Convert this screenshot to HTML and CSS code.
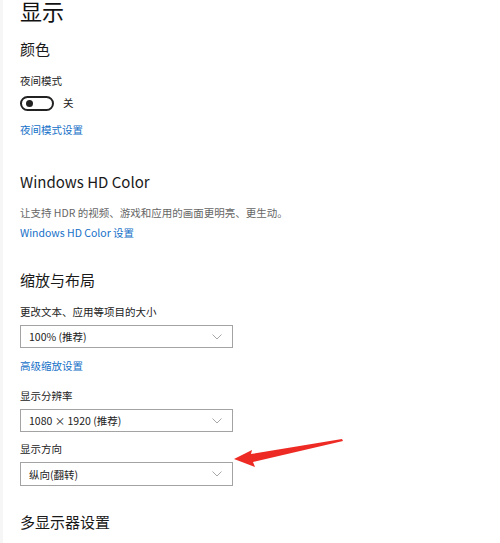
FILE: index.html
```html
<!DOCTYPE html>
<html lang="zh-CN">
<head>
<meta charset="utf-8">
<link rel="stylesheet" href="styles.css">
</head>
<body>
<div class="page">
  <div class="content">
    <h1 class="title">显示</h1>
    <h2 class="h-color">颜色</h2>
    <div class="label l-night">夜间模式</div>
    <div class="toggle-row">
      <span class="toggle"><span class="knob"></span></span>
      <span class="toggle-text">关</span>
    </div>
    <a class="link l-nightset">夜间模式设置</a>

    <h2 class="h-hd">Windows HD Color</h2>
    <div class="desc">让支持 HDR 的视频、游戏和应用的画面更明亮、更生动。</div>
    <a class="link l-hdset">Windows HD Color 设置</a>

    <h2 class="h-scale">缩放与布局</h2>
    <div class="label l-size">更改文本、应用等项目的大小</div>
    <div class="select s1"><span>100% (推荐)</span><svg class="chev" width="10" height="6" viewBox="0 0 10 6"><path d="M0.5 0.5 L5 5 L9.5 0.5" fill="none" stroke="#a8a8a8" stroke-width="1"/></svg></div>
    <a class="link l-adv">高级缩放设置</a>
    <div class="label l-res">显示分辨率</div>
    <div class="select s2"><span>1080 × 1920 (推荐)</span><svg class="chev" width="10" height="6" viewBox="0 0 10 6"><path d="M0.5 0.5 L5 5 L9.5 0.5" fill="none" stroke="#a8a8a8" stroke-width="1"/></svg></div>
    <div class="label l-ori">显示方向</div>
    <div class="select s3"><span>纵向(翻转)</span><svg class="chev" width="10" height="6" viewBox="0 0 10 6"><path d="M0.5 0.5 L5 5 L9.5 0.5" fill="none" stroke="#a8a8a8" stroke-width="1"/></svg></div>

    <h2 class="h-multi">多显示器设置</h2>
  </div>
  <svg class="arrow" width="130" height="45" viewBox="225 430 130 45">
    <polygon points="231,459 249,450 248,454 339,439 340,441 250,462 252,467" fill="#ee2a24"/>
  </svg>
</div>
</body>
</html>
```
FILE: styles.css
```css
html, body {
  margin: 0;
  padding: 0;
  background: #ffffff;
}
body {
  font-family: "Noto Sans CJK SC", "Noto Sans", sans-serif;
  color: #1a1a1a;
  overflow: hidden;
}
.page {
  position: relative;
  width: 500px;
  height: 543px;
  overflow: hidden;
  border-left: 3px solid #f6f6f6;
  box-sizing: border-box;
}
.content {
  padding-left: 17px;
  display: flex;
  flex-direction: column;
  align-items: flex-start;
}
h1, h2 {
  font-weight: normal;
  margin: 0;
}
.title {
  font-size: 22px;
  line-height: 30px;
  margin-top: -5px;
  color: #111;
}
h2 {
  font-size: 15px;
  line-height: 20px;
  color: #1a1a1a;
}
.label, .link, .desc, .toggle-text {
  font-size: 10.5px;
  line-height: 16px;
}
.label { color: #222; }
.desc { color: #666; }
.link { color: #1570c8; text-decoration: none; }

.h-color { margin-top: 14px; }
.l-night { margin-top: 14px; }
.toggle-row {
  margin-top: 6px;
  height: 16px;
  display: flex;
  align-items: center;
  gap: 9px;
}
.toggle {
  width: 34px;
  height: 15px;
  border: 2px solid #222;
  border-radius: 9px;
  box-sizing: border-box;
  display: flex;
  align-items: center;
  padding-left: 4px;
}
.knob {
  width: 7px;
  height: 7px;
  border-radius: 50%;
  background: #222;
}
.toggle-text { color: #222; }
.l-nightset { margin-top: 11px; }
.h-hd { margin-top: 34px; }
.desc { margin-top: 13px; }
.l-hdset { margin-top: 4px; }
.h-scale { margin-top: 29px; }
.l-size { margin-top: 14px; }
.select {
  width: 213px;
  height: 23px;
  border: 1.5px solid #a3a3a3;
  box-sizing: border-box;
  display: flex;
  align-items: center;
  justify-content: space-between;
  padding: 0 10px 0 8px;
  font-size: 10.5px;
  color: #222;
}
.s1 { margin-top: 5px; }
.l-adv { margin-top: 10px; }
.l-res { margin-top: 14px; }
.s2 { margin-top: 5px; }
.l-ori { margin-top: 9px; }
.s3 { margin-top: 5px; height: 24px; }
.h-multi { margin-top: 26px; }

.arrow {
  position: absolute;
  left: 225px;
  top: 430px;
}
```
